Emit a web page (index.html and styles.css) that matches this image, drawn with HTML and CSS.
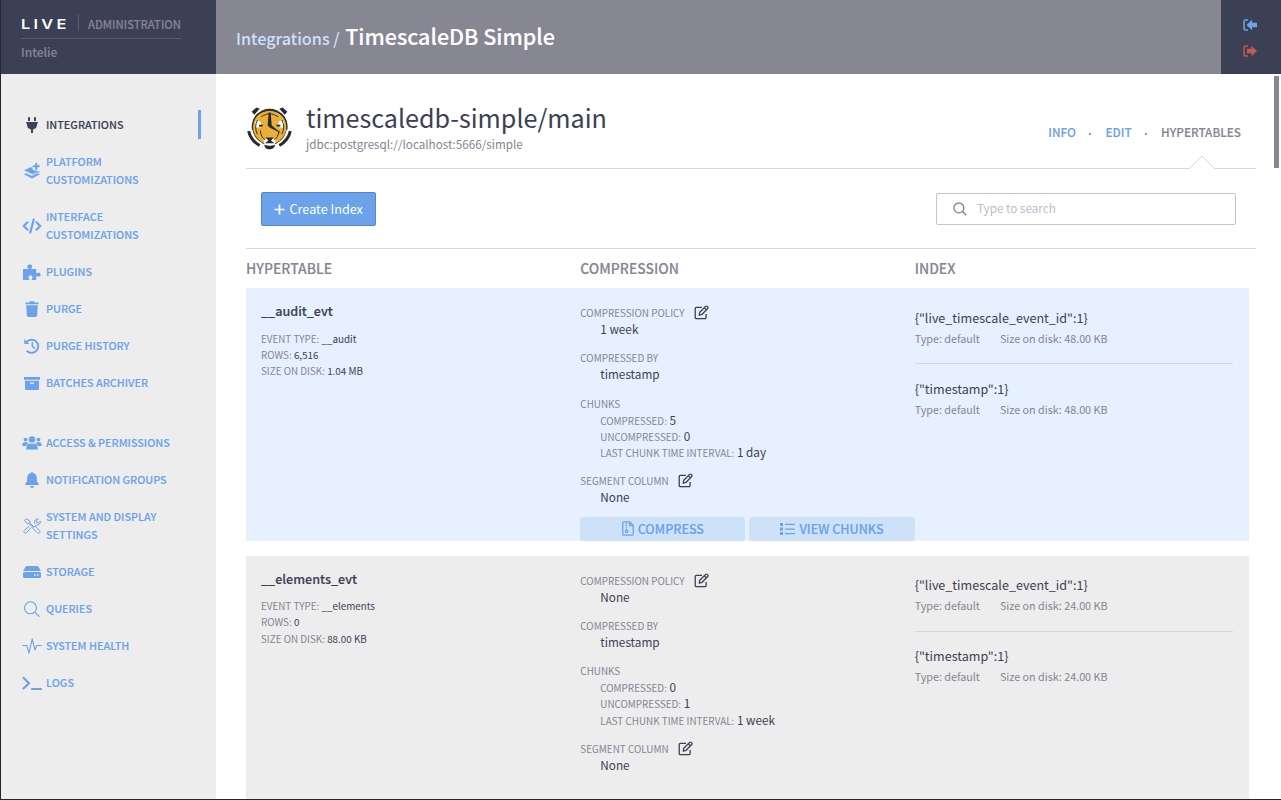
FILE: index.html
```
<!DOCTYPE html>
<html lang="en">
<head>
<meta charset="utf-8">
<title>TimescaleDB Simple</title>
<link rel="stylesheet" href="styles.css">
</head>
<body>
<svg class="defs" width="0" height="0">
  <symbol id="edit" viewBox="0 0 16 16"><path d="M8.500 2.600H2.600a1.300 1.300 0 0 0-1.300 1.300v9.300a1.300 1.300 0 0 0 1.300 1.300h9a1.300 1.300 0 0 0 1.300-1.300V9.500M5.600 10.700l.5-2.900 6.300-6.300a1.200 1.200 0 0 1 1.700 0l.5.5a1.200 1.200 0 0 1 0 1.700L8.400 10.100z M11 3l2.200 2.200" fill="none" stroke="currentColor" stroke-width="1.400" stroke-linejoin="round"/></symbol>
</svg>
<div class="app">
  <header class="top">
    <div class="brand">
      <div class="brand-row"><span class="logo"><span>LIVE</span></span><span class="admin">ADMINISTRATION</span></div>
      <div class="tenant">Intelie</div>
    </div>
    <div class="crumbs"><span class="parent">Integrations /</span><span class="current">TimescaleDB Simple</span></div>
    <div class="session">
      <svg class="enter" viewBox="0 0 14 12"><path d="M5 1H2.500A1.500 1.500 0 0 0 1 2.500v7A1.500 1.500 0 0 0 2.500 11H5" fill="none" stroke="currentColor" stroke-width="1.500"/><path d="M3.500 6 9 .8v3H14v4.400H9v3z" fill="currentColor"/></svg>
      <svg class="leave" viewBox="0 0 14 12"><path d="M5 1H2.500A1.500 1.500 0 0 0 1 2.500v7A1.500 1.500 0 0 0 2.500 11H5" fill="none" stroke="currentColor" stroke-width="1.500"/><path d="M14 6 8.500.8v3H4v4.400h4.500v3z" fill="currentColor"/></svg>
    </div>
  </header>
  <div class="body">
    <nav class="side">
      <a class="item active"><svg viewBox="0 0 20 16"><path d="M7 0a1 1 0 0 1 1 1v3H6V1a1 1 0 0 1 1-1zM13 0a1 1 0 0 1 1 1v3h-2V1a1 1 0 0 1 1-1zM4.200 5h11.600v1.400h-.8v1.400a5 5 0 0 1-4 4.700V16H9v-3.500a5 5 0 0 1-4-4.700V6.400h-.8z"/></svg><span>INTEGRATIONS</span></a>
      <a class="item"><svg viewBox="0 0 20 16"><path d="M13.200 0h2v2.300h2.500v1.900h-2.500v2.500h-2V4.200h-2.500V2.300h2.500zM2 7.300l6.500-3 2 .3.200 2.500 2.800.3 3.300.5-6.800 3z M2 11.300l1.900-1 6.100 2.800 6.100-2.800 1.900 1-8 4.200zM17.500 8.200l.5.800-7.900 3.300-1-.4z"/></svg><span>PLATFORM<br>CUSTOMIZATIONS</span></a>
      <a class="item"><svg viewBox="0 0 20 16"><path d="M5.500 4.300 1.800 8l3.700 3.700M14.500 4.300 18.200 8l-3.700 3.700M11.700 1.500 8.300 14.500" fill="none" stroke="currentColor" stroke-width="2.200" stroke-linecap="round"/></svg><span>INTERFACE<br>CUSTOMIZATIONS</span></a>
      <a class="item"><svg viewBox="0 0 20 16"><path d="M1 5h4.900c.5 0 .7-.4.3-.9A2 2 0 0 1 7.800.5a2 2 0 0 1 1.700 3.400c-.5.600-.2 1.100.3 1.100h4.400v3.600c0 .7.700 1 1.200.5a2 2 0 1 1 0 3.200c-.5-.4-1.200-.1-1.200.5V16H10c-.5-.300-.5-.8 0-1.300a2 2 0 1 0-3 0c.5.500.500 1 0 1.300H1z"/></svg><span>PLUGINS</span></a>
      <a class="item"><svg viewBox="0 0 20 16"><path d="M3.500 1.400h3.800L8 .3h4l.7 1.100h3.800v1.800h-13zM4.200 4.300h11.600l-.7 10.300a1.500 1.500 0 0 1-1.500 1.400H6.400a1.500 1.500 0 0 1-1.500-1.400z"/></svg><span>PURGE</span></a>
      <a class="item"><svg viewBox="0 0 20 16"><path d="M4.600 4A6.600 6.600 0 1 1 5.200 13.200" fill="none" stroke="currentColor" stroke-width="1.900" stroke-linecap="round"/><path d="M2.300 1 7.400 6H2.300z"/><path d="M10.300 4.500V8.200l2.200 1.900" fill="none" stroke="currentColor" stroke-width="1.500" stroke-linecap="round"/></svg><span>PURGE HISTORY</span></a>
      <a class="item"><svg viewBox="0 0 20 16"><path d="M2 2h16v2.700H2zM3 5.700h14V14a1 1 0 0 1-1 1H4a1 1 0 0 1-1-1zM7.800 7.500v1.200h4.400V7.500z" fill-rule="evenodd"/></svg><span>BATCHES ARCHIVER</span></a>
      <a class="item gap"><svg viewBox="0 0 20 16"><circle cx="10" cy="4.400" r="3.200"/><circle cx="3.600" cy="4.600" r="1.900"/><circle cx="16.400" cy="4.600" r="1.900"/><path d="M4.300 14.500v-1.700A4 4 0 0 1 8 8.700h4a4 4 0 0 1 3.700 4.100v1.700zM.4 11V9.500a2.300 2.300 0 0 1 2.300-2.300h2.500L6.500 8A6 6 0 0 0 4 11zM19.600 11V9.500a2.300 2.300 0 0 0-2.300-2.300h-2.500L13.500 8A6 6 0 0 1 16 11z"/></svg><span>ACCESS &amp; PERMISSIONS</span></a>
      <a class="item"><svg viewBox="0 0 20 16"><path d="M9.200 0h1.600v1.100a5 5 0 0 1 4 4.900c0 3 .6 4.300 1.700 5.400.6.700.2 1.700-.7 1.700H4.200c-.9 0-1.300-1-.7-1.700C4.600 10.300 5.200 9 5.200 6a5 5 0 0 1 4-4.900zM8 14h4a2 2 0 0 1-4 0z"/></svg><span>NOTIFICATION GROUPS</span></a>
      <a class="item"><svg viewBox="0 0 20 16" fill="none" stroke="currentColor" stroke-width="1" stroke-linejoin="round"><path d="M2.600 2.300 4.300.7 7.800 3v2l3.700 3.600 1.700-.2 4.300 4.200a1.500 1.500 0 0 1-2.200 2.200L11 10.600v-1.700L7 5.500H5zM12.500 5.200c-.5-2.500 1.300-4.700 3.900-4.300l-2 2.100.3 1.700 1.700.3 2-2c.4 2.500-1.700 4.500-4.200 4L12.500 8.800M9.300 9.300l-4.600 5.300a1.600 1.600 0 0 1-2.400-2.200L7.500 7.800"/></svg><span>SYSTEM AND DISPLAY<br>SETTINGS</span></a>
      <a class="item"><svg viewBox="0 0 20 16"><path d="M4.900 2h10.200a1.500 1.500 0 0 1 1.300.8l2.500 4.300H1.100l2.500-4.300A1.500 1.500 0 0 1 4.900 2zM2.500 8h15A1.500 1.500 0 0 1 19 9.500v3a1.500 1.500 0 0 1-1.500 1.500h-15A1.500 1.500 0 0 1 1 12.500v-3A1.500 1.500 0 0 1 2.500 8zM12 10.200v1.600h1.500v-1.600zM15 10.200v1.600h1.500v-1.600z" fill-rule="evenodd"/></svg><span>STORAGE</span></a>
      <a class="item"><svg viewBox="0 0 20 16" fill="none" stroke="currentColor" stroke-width="1.100"><circle cx="8.500" cy="6.800" r="6"/><path d="M12.700 11.200 17.500 15.700"/></svg><span>QUERIES</span></a>
      <a class="item"><svg viewBox="0 0 20 16" fill="none" stroke="currentColor" stroke-width="1.100" stroke-linejoin="round"><path d="M.3 7.500H4.700L7 15 10.200.8 13 12 14.800 7.500H19.700"/></svg><span>SYSTEM HEALTH</span></a>
      <a class="item"><svg viewBox="0 0 20 16" fill="none" stroke="currentColor" stroke-width="2.200" stroke-linecap="round" stroke-linejoin="round"><path d="M1.500 2.700 7 8.200 1.500 13.500M10 14h9"/></svg><span>LOGS</span></a>
    </nav>
    <main class="main">
      <div class="heading">
        <svg class="tiger" viewBox="0 0 135 128">
          <path d="M14 14 28 1l10 4-16 18zM121 14 107 1 97 5l16 18z" fill="#292a2e"/>
          <ellipse cx="68" cy="59" rx="54" ry="54" fill="#292a2e"/>
          <path d="M68 9C40 10 20 30 18 58c0 22 12 38 28 48l22 8 22-8c16-10 28-26 28-48C116 30 96 10 68 9z" fill="#e8b038"/>
          <path d="M24 44c7-5 14-5 18 2l-1 14-15 2zM112 44c-7-5-14-5-18 2l1 14 15 2zM50 98l18-6 18 6-3 18H53z" fill="#fff"/>
          <path d="M36 53h13l-4 6-9-1zM100 53H87l4 6 9-1z" fill="#292a2e"/>
          <path d="M28 27c24-23 56-23 80 0M43 29c16-12 34-12 50 0M31 39q-10 20 0 42M105 39q10 20 0 42M40 70q2 22 14 27M96 70q-2 22-14 27" fill="none" stroke="#292a2e" stroke-width="2.800"/>
          <path d="M65 16h6l3 38 28 24-33-16-7-7zM56 91h24l-8 9 10 8H54l10-8z" fill="#292a2e"/>
          <path d="M7 69q5 31 33 47M128 69q-5 31-33 47" fill="none" stroke="#fff" stroke-width="19"/>
          <path d="M5 72q6 28 33 43M130 72q-6 28-33 43" fill="none" stroke="#292a2e" stroke-width="9"/>
          <path d="M52 113q16 6 32 0c0 17-32 20-32 0z" fill="#292a2e"/>
        </svg>
        <div class="titles"><h1>timescaledb-simple/main</h1><p>jdbc:postgresql://localhost:5666/simple</p></div>
        <div class="tabs"><a>INFO</a><i></i><a>EDIT</a><i></i><a class="on">HYPERTABLES<svg class="notch" viewBox="0 0 28 15"><path d="M1 13.500 14 .5 27 13.500V15H1z" fill="#fff"/><path d="M.5 13.500H1.500L14 1 26.500 13.500H27.500" fill="none" stroke="#d6d6da"/></svg></a></div>
      </div>
      <div class="toolbar">
        <button class="create"><svg viewBox="0 0 12 12"><path d="M6 .5v11M.5 6h11" stroke="currentColor" stroke-width="1.800"/></svg><span>Create Index</span></button>
        <div class="search"><svg viewBox="0 0 15 15" fill="none" stroke="currentColor" stroke-width="1.500"><circle cx="6.300" cy="6.300" r="5.300"/><path d="M10.200 10.200 14.300 14.300"/></svg><span>Type to search</span></div>
      </div>
      <div class="thead"><span>HYPERTABLE</span><span>COMPRESSION</span><span>INDEX</span></div>

      <section class="row blue">
        <div class="c1"><h2>__audit_evt</h2><p>EVENT TYPE: <b>__audit</b></p><p>ROWS: <b>6,516</b></p><p>SIZE ON DISK: <b>1.04 MB</b></p></div>
        <div class="c2">
          <dl><dt>COMPRESSION POLICY<svg><use href="#edit"/></svg></dt><dd>1 week</dd></dl>
          <dl><dt>COMPRESSED BY</dt><dd>timestamp</dd></dl>
          <dl class="chunks"><dt>CHUNKS</dt><dd><small>COMPRESSED:</small> 5</dd><dd><small>UNCOMPRESSED:</small> 0</dd><dd><small>LAST CHUNK TIME INTERVAL:</small> 1 day</dd></dl>
          <dl><dt>SEGMENT COLUMN<svg><use href="#edit"/></svg></dt><dd>None</dd></dl>
          <div class="actions">
            <a><svg class="zip" viewBox="0 0 12 15"><path d="M.8 2A1.200 1.200 0 0 1 2 .8h5.800l3.400 3.400V13a1.200 1.200 0 0 1-1.200 1.200H2A1.200 1.200 0 0 1 .8 13zM7.500 1v3.500H11" fill="none" stroke="currentColor" stroke-width="1.300"/><path d="M4.300 2v7" stroke="currentColor" stroke-width="1.600" stroke-dasharray="1.200 .9"/><circle cx="4.600" cy="10.300" r="1.300" fill="none" stroke="currentColor" stroke-width="1.200"/></svg>COMPRESS</a>
            <a><svg class="list" viewBox="0 0 15 12"><path d="M0 0h3v3H0zM0 4.500h3v3H0zM0 9h3v3H0zM5 .8h10v1.300H5zM5 5.400h10v1.300H5zM5 9.900h10v1.300H5z" fill="currentColor"/></svg>VIEW CHUNKS</a>
          </div>
        </div>
        <div class="c3">
          <div class="index"><p>{"live_timescale_event_id":1}</p><p class="meta"><span>Type: default</span><span>Size on disk: 48.00 KB</span></p></div>
          <div class="index"><p>{"timestamp":1}</p><p class="meta"><span>Type: default</span><span>Size on disk: 48.00 KB</span></p></div>
        </div>
      </section>

      <section class="row">
        <div class="c1"><h2>__elements_evt</h2><p>EVENT TYPE: <b>__elements</b></p><p>ROWS: <b>0</b></p><p>SIZE ON DISK: <b>88.00 KB</b></p></div>
        <div class="c2">
          <dl><dt>COMPRESSION POLICY<svg><use href="#edit"/></svg></dt><dd>None</dd></dl>
          <dl><dt>COMPRESSED BY</dt><dd>timestamp</dd></dl>
          <dl class="chunks"><dt>CHUNKS</dt><dd><small>COMPRESSED:</small> 0</dd><dd><small>UNCOMPRESSED:</small> 1</dd><dd><small>LAST CHUNK TIME INTERVAL:</small> 1 week</dd></dl>
          <dl><dt>SEGMENT COLUMN<svg><use href="#edit"/></svg></dt><dd>None</dd></dl>
          <div class="actions"></div>
        </div>
        <div class="c3">
          <div class="index"><p>{"live_timescale_event_id":1}</p><p class="meta"><span>Type: default</span><span>Size on disk: 24.00 KB</span></p></div>
          <div class="index"><p>{"timestamp":1}</p><p class="meta"><span>Type: default</span><span>Size on disk: 24.00 KB</span></p></div>
        </div>
      </section>
    </main>
    <div class="scrollbar"></div>
  </div>
</div>
</body>
</html>
```
FILE: styles.css
```
* { box-sizing: border-box; margin: 0; padding: 0; }
body { font-family: "Noto Sans CJK SC", "Noto Sans", sans-serif; color: #3c4055; background: #fff; overflow: hidden; }
.defs { position: absolute; }
.app { height: 800px; border-left: 1px solid #26262a; border-bottom: 1px solid #26262a; display: flex; flex-direction: column; overflow: hidden; }

.top { height: 74px; flex: none; display: flex; background: #878693; }
.brand { width: 215px; background: #3c4055; padding: 14px 0 0 19.500px; color: #868492; font-weight: 500; }
.brand-row { width: 160px; height: 25px; border-bottom: 1px solid #5a5c6e; display: flex; padding-left: 1px; }
.logo { flex: none; width: 57px; height: 17px; border-right: 1px solid #5a5c6e; font: 600 13.500px/20px Inter, sans-serif; letter-spacing: 2.700px; color: #fff; }
.logo span { display: inline-block; margin-left: -1px; transform: scaleX(1.21); transform-origin: 0 0; }
.admin { margin-left: 9.500px; font-size: 11.200px; line-height: 20px; -webkit-text-stroke: .15px; }
.tenant { font-size: 12px; line-height: 20px; margin: 3px 0 0 .5px; -webkit-text-stroke: .15px; }
.crumbs { flex: 1; display: flex; align-items: baseline; padding-left: 20px; line-height: 72px; font-weight: 500; white-space: nowrap; }
.parent { font-size: 16.200px; color: #cde2fb; margin-right: 5.500px; }
.current { font-size: 21.500px; color: #fff; -webkit-text-stroke: .15px; }
.session { width: 60px; background: #3c4055; display: flex; flex-direction: column; align-items: center; gap: 14px; padding: 19px 3px 0 0; }
.session svg { width: 14px; height: 12px; }
.enter { color: #6ba2ea; }
.leave { color: #c25b4e; }

.body { flex: 1; min-height: 0; display: flex; }
.side { width: 215px; flex: none; background: #ededed; padding-top: 32px; }
.item { display: flex; align-items: center; padding: 9px 0 10px 20.500px; color: #6ba2ea; font-size: 10.800px; font-weight: 500; line-height: 18px; -webkit-text-stroke: .12px; }
.item svg { width: 20px; height: 16px; margin: 2px 4.500px 0 0; flex: none; fill: currentColor; }
.item svg[fill="none"] { fill: none; }
.item.active { color: #3c4055; background: linear-gradient(#6ba2ea, #6ba2ea) 197px 4px / 3px 29px no-repeat; }
.item.gap { margin-top: 23px; }

.main { width: 1040px; flex: none; padding-left: 30px; overflow: hidden; }
.heading { height: 95px; width: 1010px; border-bottom: 1px solid #d9d9dc; display: flex; padding-top: 28px; }
.tiger { width: 45px; height: 43px; margin: 4.500px 14px 0 1px; }
h1 { font-size: 25.120px; font-weight: 400; line-height: 30px; }
.titles p { font-size: 11.680px; line-height: 18px; margin-top: 3px; color: #868492; }
.tabs { margin-left: auto; padding-right: 15px; display: flex; font-size: 11.750px; font-weight: 500; line-height: 20px; padding-top: 20px; color: #6ba2ea; -webkit-text-stroke: .12px; }
.tabs i { width: 2px; height: 2px; background: currentColor; margin: 11px 14px 0 13.500px; }
.tabs a { position: relative; }
.tabs .on { color: #868492; }
.notch { position: absolute; width: 28px; height: 15px; left: 26.500px; top: 33px; }
.toolbar { height: 80px; width: 1010px; border-bottom: 1px solid #d9d9dc; padding: 23px 20px 0 15px; display: flex; justify-content: space-between; }
.create { width: 115px; height: 34px; border: 1px solid #5089c9; border-radius: 2px; background: #6ba2ea; color: #fff; font: 400 12.650px/20px "Noto Sans CJK SC", sans-serif; display: flex; align-items: center; padding-left: 12px; }
.create svg { width: 11px; height: 11px; margin-right: 4.500px; }
.search { width: 300px; height: 32px; margin-top: 1px; border: 1px solid #c3c4cd; border-radius: 2px; display: flex; align-items: center; padding-left: 16px; font-size: 11.700px; line-height: 20px; color: #bbbdc9; }
.search svg { width: 14px; height: 14px; color: #868492; margin-right: 10px; }
.search span { margin-bottom: 2px; }

.thead { width: 1003px; height: 39px; display: grid; grid-template-columns: repeat(3, 1fr); font-size: 13.900px; font-weight: 500; line-height: 39px; color: #868492; -webkit-text-stroke: .12px; }
.row { width: 1003px; height: 252.600px; margin-bottom: 15px; background: #ededed; display: grid; grid-template-columns: repeat(3, 1fr); white-space: nowrap; }
.row.blue { background: #e6f0ff; }
.c1 { padding: 13px 0 0 15px; }
.c1 h2 { font-size: 12.600px; font-weight: 500; line-height: 20px; margin-bottom: 9.500px; -webkit-text-stroke: .15px; }
.c1 p { font-size: 9.860px; line-height: 16.200px; color: #868492; }
.c1 b { font-weight: 400; color: #3c4055; }
.c2 { padding-top: 17px; font-size: 11.750px; line-height: 16.100px; }
dl { margin-bottom: 13px; }
dt { font-size: 9.880px; color: #868492; display: flex; height: 16px; }
dt svg { width: 15px; height: 15px; margin: 0 0 0 9px; color: #3c4055; }
dd { padding-left: 20px; height: 16.100px; }
dd small { font-size: 9.870px; color: #868492; }
.chunks dt { padding-top: .4px; margin-bottom: .6px; }
.actions { display: flex; gap: 4px; margin-top: -1.600px; }
.actions a { height: 24px; flex: 1; border-radius: 3px; background: #cde2f8; color: #6ba2ea; font-size: 12.500px; font-weight: 500; display: flex; align-items: center; justify-content: center; -webkit-text-stroke: .15px; }
.actions a:first-child { flex: none; width: 165px; }
.zip { width: 12px; height: 15px; margin-right: 4px; }
.list { width: 15px; height: 12px; margin-right: 4px; }
.c3 { padding: 19.700px 16px 0 0; }
.index { height: 71px; font-size: 12.570px; line-height: 20px; }
.index:first-child { height: 56.300px; border-bottom: 1px solid #d4d7de; margin-bottom: 14.700px; }
.meta { font-size: 10.750px; color: #868492; line-height: 20px; display: flex; gap: 20px; margin-top: 1px; }

.scrollbar { width: 5px; height: 92px; margin: 2px 0 0 18px; background: #878693; }
```
